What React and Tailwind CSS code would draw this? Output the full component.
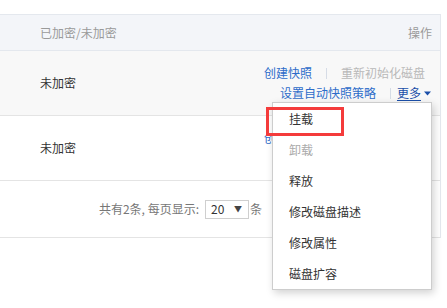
import React from 'react';

const Sep = ({ className = '' }) => (
  <span className={`inline-block w-px h-[11px] bg-[#d6dce6] ${className}`} />
);

const Actions = () => (
  <div className="flex flex-col items-end leading-[20px]">
    <div className="flex items-center mr-[7px]">
      <span className="text-[#2d6cc9]">创建快照</span>
      <Sep className="mx-[14px]" />
      <span className="text-[#b9b9b9]">重新初始化磁盘</span>
    </div>
    <div className="flex items-center">
      <span className="text-[#2d6cc9]">设置自动快照策略</span>
      <Sep className="ml-[14px] mr-[6px]" />
      <span className="text-[#1b4fa8] underline underline-offset-2">更多</span>
      <svg width="7" height="5" viewBox="0 0 7 5" className="ml-[3px] mr-px">
        <path d="M0 0.5h7L3.5 4.5z" fill="#1b4fa8" />
      </svg>
    </div>
  </div>
);

const menu = [
  { label: '挂载' },
  { label: '卸载', disabled: true },
  { label: '释放' },
  { label: '修改磁盘描述' },
  { label: '修改属性' },
  { label: '磁盘扩容' },
];

export default function App() {
  return (
    <div className="relative w-[447px] h-[308px] bg-white pt-[14px] text-[12px] text-[#333] font-['Noto_Sans_CJK_SC','Microsoft_YaHei',sans-serif] overflow-hidden">
      <div className="w-[441px] border-t border-r border-[#e4e8ee]">
        {/* header */}
        <div className="h-[36px] flex items-center justify-between pl-[40px] pr-[8px] bg-[#f3f5f9] border-b border-[#e4e8ee] text-[#9a9a9a]">
          <span>已加密/未加密</span>
          <span>操作</span>
        </div>

        {/* rows */}
        {[0, 1].map((i) => (
          <div
            key={i}
            className={`h-[65px] flex items-center justify-between pl-[40px] pr-[8px] border-b border-[#e4e4e4] ${
              i === 0 ? 'bg-[#f8f8f8]' : 'bg-white'
            }`}
          >
            <span className="text-[#333]">未加密</span>
            <Actions />
          </div>
        ))}

        {/* pagination */}
        <div className="h-[57px] flex items-center justify-end pr-[178px] border-b border-[#e4e4e4] text-[#777]">
          <span>共有2条, 每页显示:</span>
          <div className="ml-[6px] w-[44px] h-[19px] border border-[#cfcfcf] flex items-center justify-between pl-[5px] pr-[6px] text-[#333]">
            <span className="leading-none">20</span>
            <span className="text-[8px] leading-none text-[#444]">▼</span>
          </div>
          <span className="ml-[1px]">条</span>
        </div>
      </div>

      {/* dropdown menu */}
      <div className="absolute left-[272px] top-[102px] w-[160px] bg-white border border-[#cdcdcd] shadow-[2px_3px_8px_rgba(0,0,0,0.18)]">
        {menu.map((m) => (
          <div
            key={m.label}
            className={`h-[31px] flex items-center pl-[16px] ${m.disabled ? 'text-[#aaa]' : 'text-[#333]'}`}
          >
            {m.label}
          </div>
        ))}
      </div>

      {/* highlight box */}
      <div className="absolute left-[266px] top-[107px] w-[78px] h-[29px] border-[3px] border-[#f43b3b]" />
    </div>
  );
}
